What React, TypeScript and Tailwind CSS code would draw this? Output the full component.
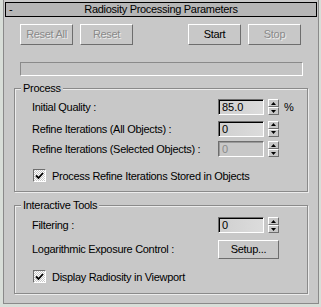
import type { ReactNode } from 'react';

const font = { fontFamily: '"Liberation Sans", Arial, sans-serif' };

function Btn({ label, disabled, w = 'w-[53px]', h = 'h-[21px]' }: { label: string; disabled?: boolean; w?: string; h?: string }) {
  return (
    <div
      className={`${w} ${h} flex items-center justify-center border border-t-white border-l-white border-b-[#6e6e6e] border-r-[#6e6e6e] bg-[#c8c8c8] text-[11px] tracking-[-0.3px] ${
        disabled ? 'text-[#8a8a8a] [text-shadow:1px_1px_0_#ececec]' : 'text-black'
      }`}
    >
      {label}
    </div>
  );
}

function Spinner() {
  return (
    <div className="ml-[4px] flex h-[16px] w-[11px] flex-col">
      <div className="flex h-[8px] items-center justify-center border border-t-white border-l-white border-b-[#6e6e6e] border-r-[#6e6e6e]">
        <svg width="5" height="3" viewBox="0 0 5 3">
          <path d="M2.5 0 L5 3 L0 3 Z" fill="#000" />
        </svg>
      </div>
      <div className="flex h-[8px] items-center justify-center border border-t-white border-l-white border-b-[#6e6e6e] border-r-[#6e6e6e]">
        <svg width="5" height="3" viewBox="0 0 5 3">
          <path d="M0 0 L5 0 L2.5 3 Z" fill="#000" />
        </svg>
      </div>
    </div>
  );
}

function NumField({ value, disabled }: { value: string; disabled?: boolean }) {
  return (
    <div className="flex items-center">
      <div className="h-[16px] w-[46px] border border-t-[#6e6e6e] border-l-[#6e6e6e] border-b-white border-r-white">
        <div
          className={`flex h-full items-center border-t border-l pl-[2px] text-[11px] leading-none ${
            disabled
              ? 'border-t-[#9a9a9a] border-l-[#9a9a9a] bg-[#c8c8c8] text-[#8a8a8a]'
              : 'border-t-black border-l-black bg-gradient-to-r from-[#d0d0d0] to-[#dcdcdc] text-black'
          }`}
        >
          {value}
        </div>
      </div>
      <Spinner />
    </div>
  );
}

function Row({ label, children, className = '' }: { label: string; children: ReactNode; className?: string }) {
  return (
    <div className={`flex items-center ${className}`}>
      <div className="w-[203px] whitespace-nowrap pl-[17px] text-[11px] tracking-[-0.3px]">{label}</div>
      {children}
    </div>
  );
}

function Check({ label, className = '' }: { label: string; className?: string }) {
  return (
    <div className={`flex items-center pl-[18px] ${className}`}>
      <div className="flex h-[13px] w-[13px] items-center justify-center border border-t-[#6e6e6e] border-l-[#6e6e6e] border-b-white border-r-white bg-[repeating-conic-gradient(#ffffff_0_25%,#c8c8c8_0_50%)] bg-[length:2px_2px]">
        <svg width="9" height="8" viewBox="0 0 9 8">
          <path d="M1 3.5 L3.5 6 L8 1" stroke="#000" strokeWidth="1.8" fill="none" />
        </svg>
      </div>
      <span className="ml-[6px] whitespace-nowrap text-[11px] tracking-[-0.3px]">{label}</span>
    </div>
  );
}

function Group({ title, children, className = '' }: { title: string; children: ReactNode; className?: string }) {
  return (
    <div className={`relative mx-[10px] border border-[#8a8a8a] shadow-[inset_1px_1px_0_#ececec,1px_1px_0_#ececec] ${className}`}>
      <div className="absolute -top-[8px] left-[6px] bg-[#c8c8c8] px-[2px] text-[11px] leading-[14px] tracking-[-0.3px]">{title}</div>
      {children}
    </div>
  );
}

export default function App() {
  return (
    <div className="flex h-[307px] w-[321px] bg-[#d8ded8] text-black" style={font}>
      <div className="ml-[3px] mr-[2px] mb-[3px] flex flex-1 flex-col border-l border-r border-b border-[#8a8a8a] bg-[#c8c8c8]">
        <div className="mx-[1px] mt-[2px] flex h-[15px] items-center border border-black bg-[#b6b6b6] text-[11px] tracking-[-0.3px]">
          <span className="w-[14px] pl-[3px]">-</span>
          <span className="flex-1 pr-[14px] text-center">Radiosity Processing Parameters</span>
        </div>

        <div className="mt-[7px] flex items-center pl-[16px]">
          <Btn label="Reset All" disabled />
          <div className="ml-[7px]">
            <Btn label="Reset" disabled />
          </div>
          <div className="ml-[55px]">
            <Btn label="Start" />
          </div>
          <div className="ml-[7px]">
            <Btn label="Stop" disabled />
          </div>
        </div>

        <div className="ml-[16px] mt-[17px] h-[14px] w-[283px] border border-t-[#8a8a8a] border-l-[#8a8a8a] border-b-white border-r-white bg-[#c4c4c4]" />

        <Group title="Process" className="mt-[12px] h-[104px]">
          <Row label="Initial Quality :" className="mt-[10px]">
            <NumField value="85.0" />
            <span className="ml-[5px] text-[11px]">%</span>
          </Row>
          <Row label="Refine Iterations (All Objects) :" className="mt-[5px]">
            <NumField value="0" />
          </Row>
          <Row label="Refine Iterations (Selected Objects) :" className="mt-[4px]">
            <NumField value="0" disabled />
          </Row>
          <Check label="Process Refine Iterations Stored in Objects" className="mt-[10px]" />
        </Group>

        <Group title="Interactive Tools" className="mt-[13px] h-[89px]">
          <Row label="Filtering :" className="mt-[11px]">
            <NumField value="0" />
          </Row>
          <Row label="Logarithmic Exposure Control :" className="mt-[6px]">
            <Btn label="Setup..." w="w-[61px]" h="h-[19px]" />
          </Row>
          <Check label="Display Radiosity in Viewport" className="mt-[10px]" />
        </Group>
      </div>
    </div>
  );
}
